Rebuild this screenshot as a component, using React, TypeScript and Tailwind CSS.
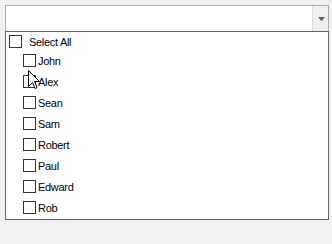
import React from "react";

const names = ["John", "Alex", "Sean", "Sam", "Robert", "Paul", "Edward", "Rob"];

function Box() {
  return <div className="w-[13px] h-[13px] border border-[#333333] bg-white shrink-0" />;
}

export default function App() {
  return (
    <div
      className="relative w-[332px] h-[244px] bg-[#f0f0f0] pt-[5px] pl-[5px] text-[11px] tracking-[-0.3px] text-black"
      style={{ fontFamily: '"Liberation Sans", Arial, sans-serif' }}
    >
      <div className="w-[324px] h-[26px] border border-b-0 border-[#acacac] bg-white flex justify-end">
        <div className="w-[16px] h-full border-l border-[#dcdcdc] bg-[#f0f0f0] flex items-center justify-center pl-[1px]">
          <svg width="7" height="4" viewBox="0 0 7 4">
            <path d="M0 0H7L3.5 4Z" fill="#606060" />
          </svg>
        </div>
      </div>
      <div className="w-[324px] h-[189px] border border-[#646464] bg-white pt-[3px] flex flex-col overflow-hidden">
        <div className="h-[19px] shrink-0 pl-[3px] flex items-start">
          <div className="h-[13px] flex items-center gap-[7px]">
            <Box />
            <span className="leading-[13px] pt-[1px]">Select All</span>
          </div>
        </div>
        {names.map((n) => (
          <div key={n} className="h-[21px] shrink-0 pl-[17px] flex items-start">
            <div className="h-[13px] flex items-center gap-[2px]">
              <Box />
              <span className="leading-[13px] pt-[1px]">{n}</span>
            </div>
          </div>
        ))}
      </div>
      <svg className="absolute left-[28px] top-[70px]" width="12" height="20" viewBox="0 0 12 20">
        <path
          d="M0.5 0.5V16.5L4.5 12.5L7 18.5L9 17.5L6.5 11.5H11.5Z"
          fill="white"
          stroke="black"
          strokeWidth="1"
          strokeLinejoin="miter"
        />
      </svg>
    </div>
  );
}
